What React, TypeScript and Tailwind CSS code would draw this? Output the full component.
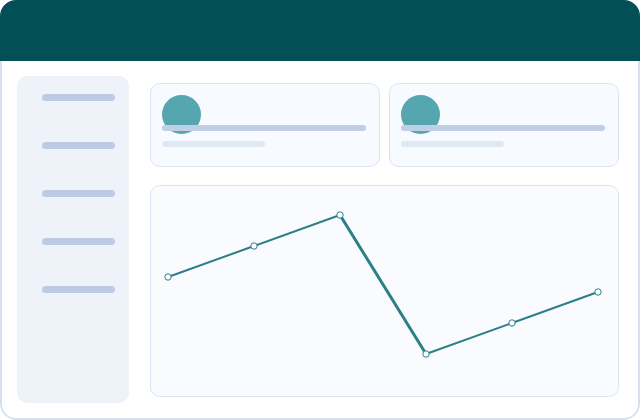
const navItems = [0, 1, 2, 3, 4];

// chart points in card coordinates
const points = [
  [18, 92],
  [104, 61],
  [190, 30],
  [276, 169],
  [362, 138],
  [448, 107],
];

function StatCard() {
  return (
    <div className="flex h-[84px] flex-col rounded-[10px] border border-[#dae4f2] bg-[#f7faff] px-[11px] pt-[11px]">
      <div className="h-[39px] w-[39px] rounded-full bg-[#55a6ae]" />
      <div className="-mt-[9px] h-[6px] w-[204px] rounded-full bg-[#c0cfe5]" />
      <div className="mt-[10px] h-[6px] w-[103px] rounded-full bg-[#e0e8f3]" />
    </div>
  );
}

function LineChart() {
  return (
    <div className="h-[212px] rounded-[10px] border border-[#dae4f2] bg-[#f9fbff]">
      <svg width="469" height="212" viewBox="0 0 469 212" className="-m-px block">
        {points.slice(1).map(([x, y], i) => {
          const [px, py] = points[i];
          return (
            <line
              key={i}
              x1={px}
              y1={py}
              x2={x}
              y2={y}
              stroke="#2b7f86"
              strokeWidth={i === 2 ? 3 : 2}
              strokeLinecap="round"
            />
          );
        })}
        {points.map(([x, y], i) => (
          <circle key={i} cx={x} cy={y} r="3.2" fill="#ffffff" stroke="#2b7f86" strokeWidth="1" />
        ))}
      </svg>
    </div>
  );
}

export default function App() {
  return (
    <div className="flex h-[420px] w-[640px] flex-col overflow-hidden rounded-[16px] bg-white">
      <div className="h-[61px] shrink-0 bg-[#034f58]" />
      <div className="flex min-h-0 flex-1 rounded-b-[16px] border-x-2 border-b-2 border-[#d6e0ee] pl-[15px] pr-[19px]">
        <div className="mt-[15px] mb-[15px] flex w-[112px] shrink-0 flex-col gap-[41px] rounded-[10px] bg-[#eef3fa] pl-[25px] pt-[18px]">
          {navItems.map((i) => (
            <div key={i} className="h-[7px] w-[73px] rounded-full bg-[#bccbe3]" />
          ))}
        </div>
        <div className="ml-[21px] flex flex-1 flex-col gap-[18px] pt-[22px]">
          <div className="grid grid-cols-2 gap-[9px]">
            <StatCard />
            <StatCard />
          </div>
          <LineChart />
        </div>
      </div>
    </div>
  );
}
